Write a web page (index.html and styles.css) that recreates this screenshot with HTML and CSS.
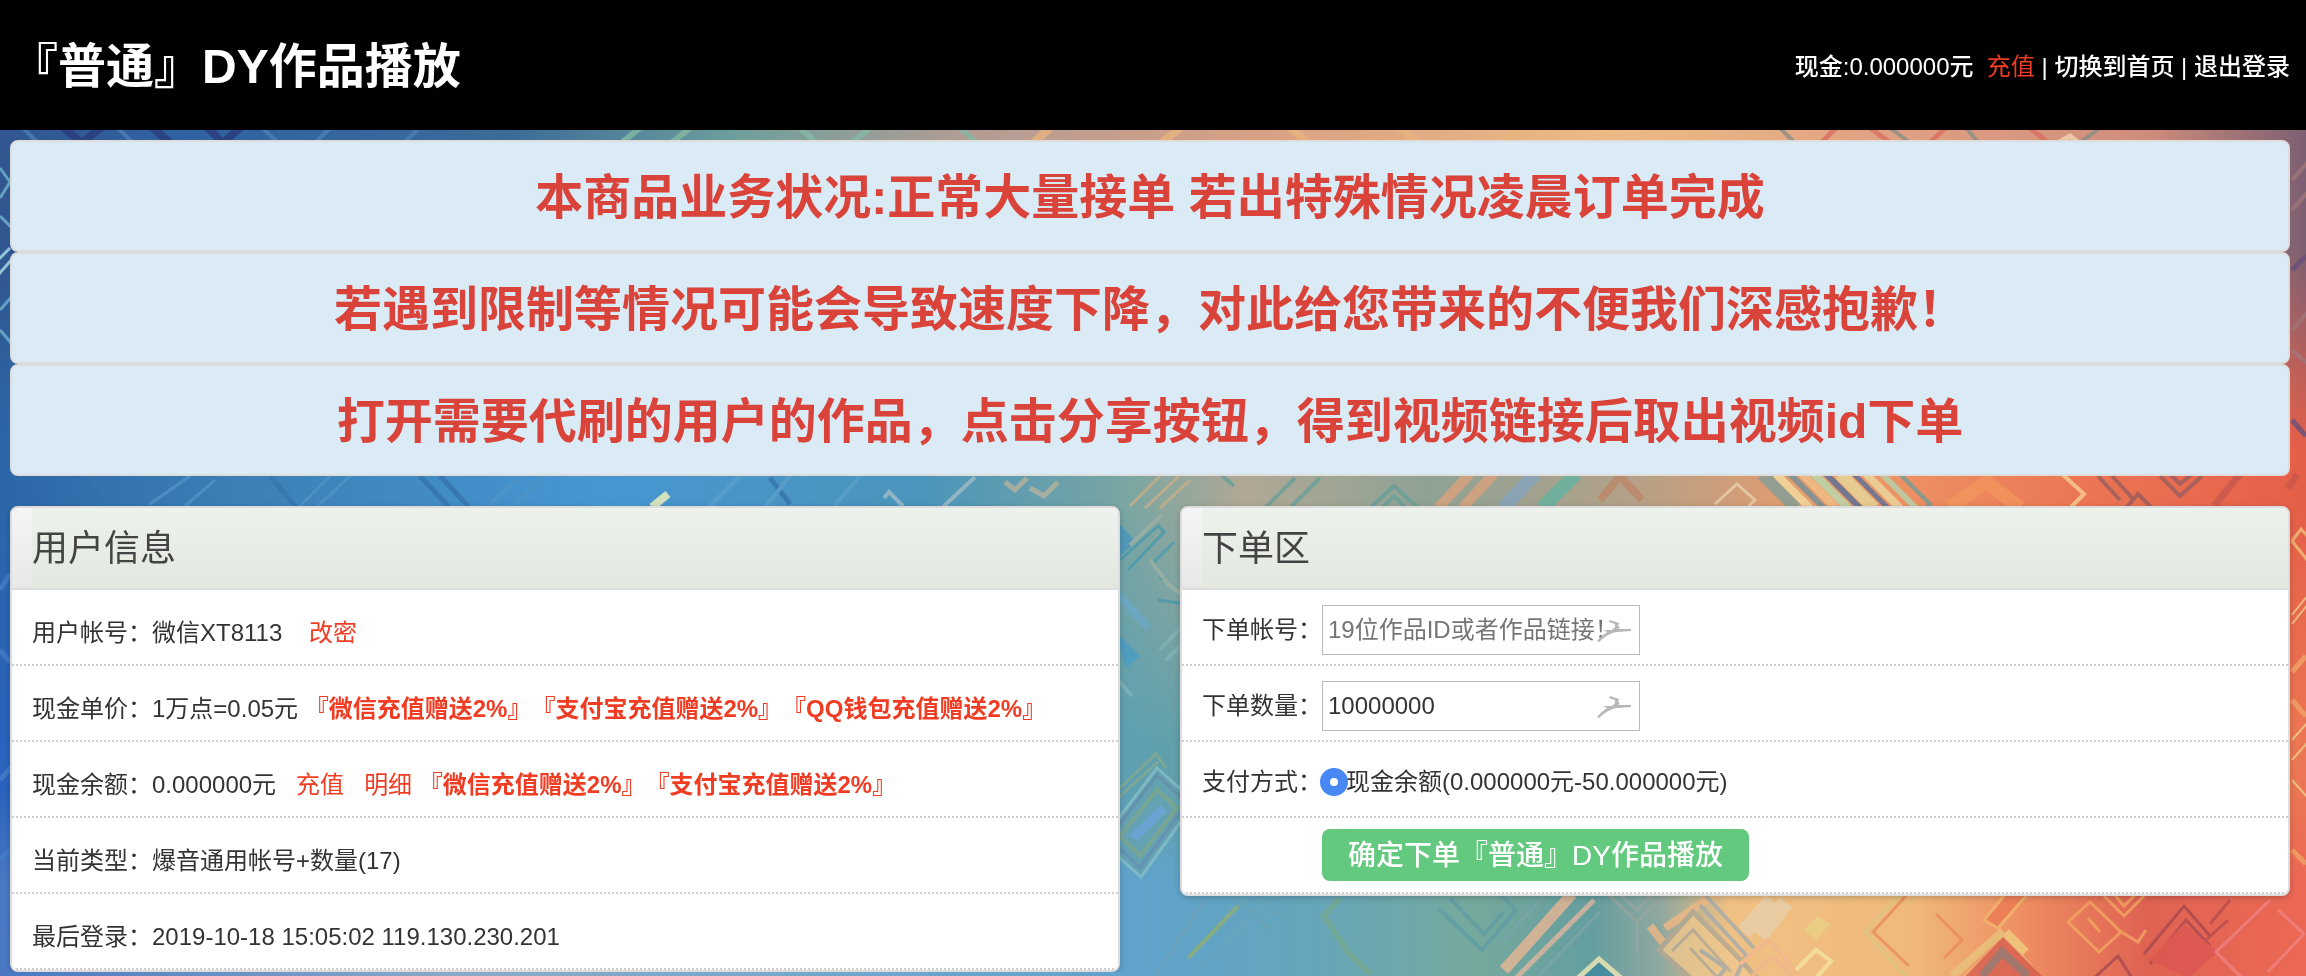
FILE: index.html
```html
<!DOCTYPE html>
<html lang="zh-CN">
<head>
    <meta charset="UTF-8">
    <meta name="viewport" content="width=device-width, initial-scale=1.0">
    <title>『普通』DY作品播放</title>
    <link rel="stylesheet" href="styles.css">
</head>
<body>

<!-- Page wallpaper -->
<svg class="wallpaper" viewBox="0 0 2306 976" preserveAspectRatio="xMidYMid slice" aria-hidden="true">
    <defs>
        <linearGradient id="bgTop">
            <stop offset="0" stop-color="#32568f"/>
            <stop offset=".08" stop-color="#2f62a2"/>
            <stop offset=".22" stop-color="#3a6b98"/>
            <stop offset=".32" stop-color="#6f9f9c"/>
            <stop offset=".42" stop-color="#b39c94"/>
            <stop offset=".55" stop-color="#d9a183"/>
            <stop offset=".7" stop-color="#edba84"/>
            <stop offset=".82" stop-color="#e0a183"/>
            <stop offset=".93" stop-color="#d18d7b"/>
            <stop offset="1" stop-color="#7c5f72"/>
        </linearGradient>
        <linearGradient id="bgMid">
            <stop offset="0" stop-color="#2c66a8"/>
            <stop offset=".1" stop-color="#3b7fb6"/>
            <stop offset=".26" stop-color="#4796d2"/>
            <stop offset=".4" stop-color="#4a95bb"/>
            <stop offset=".49" stop-color="#7ba6a2"/>
            <stop offset=".54" stop-color="#b1a894"/>
            <stop offset=".62" stop-color="#8ea294"/>
            <stop offset=".7" stop-color="#b0a18a"/>
            <stop offset=".8" stop-color="#ee9a68"/>
            <stop offset=".9" stop-color="#eb7655"/>
            <stop offset="1" stop-color="#e55f48"/>
        </linearGradient>
        <linearGradient id="bgLow">
            <stop offset="0" stop-color="#2a62bd"/>
            <stop offset=".2" stop-color="#4b86c4"/>
            <stop offset=".48" stop-color="#5d9fb5"/>
            <stop offset=".52" stop-color="#62a0a6"/>
            <stop offset=".8" stop-color="#ec9a68"/>
            <stop offset="1" stop-color="#eb7653"/>
        </linearGradient>
        <linearGradient id="bgBottom">
            <stop offset="0" stop-color="#4a78c2"/>
            <stop offset=".2" stop-color="#8cabc8"/>
            <stop offset=".49" stop-color="#5fa3cd"/>
            <stop offset=".57" stop-color="#66a5b9"/>
            <stop offset=".64" stop-color="#76a99d"/>
            <stop offset=".69" stop-color="#649e9f"/>
            <stop offset=".72" stop-color="#8fa89f"/>
            <stop offset=".75" stop-color="#f0c184"/>
            <stop offset=".83" stop-color="#efb97a"/>
            <stop offset=".88" stop-color="#ee8c60"/>
            <stop offset=".93" stop-color="#df6353"/>
            <stop offset="1" stop-color="#ec6854"/>
        </linearGradient>
        <linearGradient id="fadeMid" x2="0" y2="1">
            <stop offset="0" stop-color="#000"/>
            <stop offset=".5" stop-color="#fff"/>
        </linearGradient>
        <mask id="maskMid" maskUnits="userSpaceOnUse" x="0" y="250" width="2306" height="726">
            <rect y="250" width="2306" height="400" fill="url(#fadeMid)"/>
            <rect y="649" width="2306" height="327" fill="#fff"/>
        </mask>
        <mask id="maskLow" maskUnits="userSpaceOnUse" x="0" y="510" width="2306" height="466">
            <rect y="510" width="2306" height="466" fill="url(#fadeMid)"/>
        </mask>
        <mask id="maskBottom" maskUnits="userSpaceOnUse" x="0" y="790" width="2306" height="186">
            <rect y="790" width="2306" height="186" fill="url(#fadeMid)"/>
        </mask>
    </defs>
    <rect width="2306" height="976" fill="url(#bgTop)"/>
    <rect y="250" width="2306" height="726" fill="url(#bgMid)" mask="url(#maskMid)"/>
    <rect y="510" width="2306" height="466" fill="url(#bgLow)" mask="url(#maskLow)"/>
    <rect y="790" width="2306" height="186" fill="url(#bgBottom)" mask="url(#maskBottom)"/>

    <g fill="none" opacity=".8">
        <!-- top edge -->
        <path d="M60 125l22 18 22-18M150 125l20 18M205 125l18 18 20-18" stroke="#2a3c7c" stroke-width="8"/>
        <path d="M20 125l18 18M118 128l14 14M330 128l-16 16M262 128l18 16M420 128l-18 16" stroke="#4b7fb5" stroke-width="4"/>
        <path d="M640 128l-20 16M690 128l-20 16M800 128l18 16M870 128l-20 16M960 128l18 16" stroke="#86b8a4" stroke-width="6"/>
        <path d="M1050 128l-18 16M1180 128l-20 16M1290 128l20 16M1400 128l20 16M1520 128l-18 16" stroke="#e8b47d" stroke-width="8"/>
        <path d="M1780 128l16 16M1890 128l22 16M1966 128l12 14M2100 128l-22 16" stroke="#8a8f86" stroke-width="4"/>
        <path d="M1820 144l18-18M1870 128l22 16M1928 144l20-18M2030 128l20 16" stroke="#db6f63" stroke-width="5"/>
        <path d="M2056 144l14-8 10 8" stroke="#f3d5b0" stroke-width="5"/>

        <!-- edge columns -->
        <path d="M0 168l10 14-10 16M0 310l14-16M0 216l12 12M0 330l12 14" stroke="#6fb6cf" stroke-width="3"/>
        <path d="M-4 262l14-14M-2 275l16-18" stroke="#a3e3ea" stroke-width="3"/>
        <path d="M0 590l10-16M0 650l10 12M0 780l12-14M0 860l12-12M0 920l10 10" stroke="#477dc8" stroke-width="5"/>
        <path d="M2292 180l16-18M2292 210l16-18M2292 330l16-18M2292 350l16 14" stroke="#a0777a" stroke-width="4"/>
        <path d="M2292 270l14-14M2292 420l14 16" stroke="#66507c" stroke-width="5"/>
        <path d="M2292 541l9-12 9 10M2292 541l16 20" stroke="#f0c078" stroke-width="3"/>
        <path d="M2292 615l16-20M2292 624l16-20M2292 740l16-18M2292 780l16 18M2292 760l16-18" stroke="#f2d08c" stroke-width="2"/>
        <path d="M2292 672l14-16M2292 850l14 14M2292 700l14 16" stroke="#f2a468" stroke-width="5"/>

        <!-- strip between the notices and the panels -->
        <path d="M190 476l-40 28M215 480l-30 26M330 476l-30 30M350 476l-32 30M520 476l-32 30M545 476l-32 30" stroke="#4f94c8" stroke-width="3"/>
        <path d="M90 476l28 30M270 476l25 30M420 476l28 30M440 476l28 30M770 478l20 26" stroke="#3674ad" stroke-width="5"/>
        <path d="M668 494l-16 13" stroke="#f4f6b8" stroke-width="8"/>
        <path d="M740 476l-30 30M790 476l-24 30M860 476l-26 30" stroke="#5ba0c8" stroke-width="4"/>
        <path d="M884 498l5-6 14 14M975 477l-32 30" stroke="#9fbcc7" stroke-width="4"/>
        <path d="M1005 482l10 8 12-12M1030 488l14 8 14-14" stroke="#b6b29c" stroke-width="5"/>
        <path d="M1130 506l30-30M1145 508l34-32M1160 508l30-28" stroke="#c9ae87" stroke-width="3"/>
        <path d="M1222 476l12 10M1265 508l30-30M1290 508l30-30M1370 508l24-22 24 22M1382 508l12-12 12 12" stroke="#68a09a" stroke-width="4"/>
        <path d="M1470 474l-32 34M1494 474l-32 34" stroke="#dba27c" stroke-width="10"/>
        <path d="M1535 474l-32 34" stroke="#86a4bc" stroke-width="14"/>
        <path d="M1576 474l-34 34" stroke="#65b3a0" stroke-width="14"/>
        <path d="M1600 500l20-24 22 24" stroke="#bd8768" stroke-width="8"/>
        <path d="M1715 504l22-20 18 16-8 8" stroke="#e8d0ac" stroke-width="3"/>
        <path d="M1762 474l34 34" stroke="#829f98" stroke-width="12"/>
        <path d="M1776 474l34 34" stroke="#f4dda0" stroke-width="8"/>
        <path d="M1790 474l34 34" stroke="#70929b" stroke-width="6"/>
        <path d="M1802 474l34 34" stroke="#f0bf86" stroke-width="8"/>
        <path d="M1814 474l34 34" stroke="#b7dbb1" stroke-width="8"/>
        <path d="M1826 474l34 34" stroke="#536f9a" stroke-width="6"/>
        <path d="M1840 474l34 34" stroke="#e5d89b" stroke-width="12"/>
        <path d="M1854 474l34 34" stroke="#5a719a" stroke-width="5"/>
        <path d="M1866 474l34 34" stroke="#e9d99f" stroke-width="8"/>
        <path d="M1882 474l34 34" stroke="#b3d5ac" stroke-width="6"/>
        <path d="M1900 474l30 30-6 6" stroke="#709d99" stroke-width="4"/>
        <path d="M1950 508l36-26 34 26" stroke="#f4955d" stroke-width="14"/>
        <path d="M2062 474l22 20-14 14" stroke="#f7cf92" stroke-width="4"/>
        <path d="M2098 476l22 24M2112 476l22 24M2160 476l20 20 22-20M2170 474l10 10 12-10M2126 508l12-14 14 14" stroke="#9a5d5e" stroke-width="4"/>
        <path d="M2240 474l-26 32M2298 474l-10 14" stroke="#c8584f" stroke-width="7"/>

        <!-- column between the panels -->
        <path d="M1116 520l20 22-16 14" fill="#4a97bc"/>
        <path d="M1120 560l38-34 6 6-36 38M1162 580l-8-18 20-20M1158 600l28 4" stroke="#4a9aaf" stroke-width="3"/>
        <path d="M1130 545l32-30M1150 560l18 24 16 12" stroke="#9db1a4" stroke-width="4"/>
        <path d="M1118 594l30 34" stroke="#6ba8c4" stroke-width="8"/>
        <path d="M1114 630l26 26-14 12" fill="#4b9cc4"/>
        <path d="M1180 628l-20 22M1184 642l-18 18M1118 680l14 16" stroke="#82b3b5" stroke-width="4"/>
        <path d="M1120 788l36-34 10 14M1118 798l40-36" stroke="#84aa90" stroke-width="3"/>
        <path d="M1157 768l38 34-54 75-40-36z" stroke="#86bfc8" stroke-width="3" fill="#66a2b2"/>
        <path d="M1157 775l30 28-47 65-31-30z" stroke="#668fae" stroke-width="3"/>
        <path d="M1157 790l20 18-37 48-20-20z" stroke="#7ea88a" stroke-width="4"/>
        <path d="M1133 838l31-30" stroke="#6ea5da" stroke-width="9"/>

        <!-- bottom edge -->
        <path d="M1205 900l-50 76M1250 918l-50 50M1230 890l40 40M1262 900l20 18" stroke="#6fa4b8" stroke-width="3"/>
        <path d="M1238 906l-50 52" stroke="#8fae74" stroke-width="4"/>
        <path d="M1340 898l-16 18 24 36M1345 950l26 24" stroke="#74a990" stroke-width="6"/>
        <path d="M1438 908l44 42 34-40-18-18M1450 898l34 36 20-22" stroke="#609da3" stroke-width="4"/>
        <path d="M1545 896l-46 48M1600 912l-62 64" stroke="#7da4aa" stroke-width="3"/>
        <path d="M1572 894l-68 76" stroke="#e9b795" stroke-width="11"/>
        <path d="M1594 900l-78 78" stroke="#dfb79f" stroke-width="5"/>
        <path d="M1578 978l21-19 22 19" stroke="#f1eab5" stroke-width="5" fill="#3f88a0"/>
        <path d="M1608 894l29 28 28-28M1620 894l17 16 16-16M1637 922v30" stroke="#9aa5a0" stroke-width="3"/>
        <path d="M1715 894l-50 34M1650 926l14 18" stroke="#efb884" stroke-width="8"/>
        <path d="M1659 950l34-38 40 40 24 26-60 6z" stroke="#b3a893" stroke-width="5" fill="#eec78d"/>
        <path d="M1672 951l21-21 38 42M1690 948l28 30" stroke="#b7ab96" stroke-width="3"/>
        <path d="M1700 905l46 50-10 22M1706 896l48 52M1700 950l26 18-10 12" stroke="#a7abac" stroke-width="4"/>
        <path d="M1772 900l-28 32M1786 902l-26 34" stroke="#e8d0aa" stroke-width="16"/>
        <path d="M1752 976l20-20 20 20M1740 964l28-24 30 34" stroke="#f0b78e" stroke-width="4"/>
        <path d="M1796 970l20-20 15 11-16 18" stroke="#f4e49f" stroke-width="4"/>
        <path d="M1804 930l14-14 12 8-14 16z" fill="#ead184"/>
        <path d="M1906 896l-33 36 36 34" stroke="#ea8c5c" stroke-width="3"/>
        <path d="M1898 896l-33 36 40 44" stroke="#dcc681" stroke-width="3"/>
        <path d="M1936 914l26 26-18 18" stroke="#ea8c5c" stroke-width="3"/>
        <path d="M2004 896l-20 24 14 8 28-32" stroke="#f0b76d" stroke-width="3" fill="#ed7a55"/>
        <path d="M1952 976l48-42 36 42" stroke="#e8c47d" stroke-width="8"/>
        <path d="M2003 937l40 40h-78z" fill="#d75f51"/>
        <path d="M1982 976l20-24 26 24" stroke="#8e716f" stroke-width="8"/>
        <path d="M2006 932l20 20" stroke="#f1cf7f" stroke-width="8"/>
        <path d="M2090 902l31 30-22 20-31-30z" stroke="#f3a662" stroke-width="3"/>
        <path d="M2088 918l12 14M2104 896l20 20 20-20M2114 894l10 12 12-12M2118 930l20 12 8-12" stroke="#f3a562" stroke-width="3"/>
        <path d="M2092 980l26-24 14 22M2144 954l40-48 26 30M2150 964l36-44 24 26" stroke="#a9484f" stroke-width="3"/>
        <path d="M2184 924l34 28-30 26-40-18z" fill="#dc5751"/>
        <path d="M2228 920l-22 20M2230 900l-20 24" stroke="#b84e4c" stroke-width="3"/>
        <path d="M2270 900l-54 52 26 26M2278 910l26 24-36 38" stroke="#f08384" stroke-width="3"/>
    </g>
</svg>

<header class="header">
    <h1>『普通』DY作品播放</h1>
    <nav class="header-nav">
        现金:0.000000元&nbsp; <a class="red" href="#">充值</a> | <a href="#">切换到首页</a> | <a href="#">退出登录</a>
    </nav>
</header>

<main class="main">
    <div class="notice">本商品业务状况:正常大量接单 若出特殊情况凌晨订单完成</div>
    <div class="notice">若遇到限制等情况可能会导致速度下降，对此给您带来的不便我们深感抱歉！</div>
    <div class="notice">打开需要代刷的用户的作品，点击分享按钮，得到视频链接后取出视频id下单</div>

    <div class="columns">
        <section class="panel">
            <div class="panel-head"><h3>用户信息</h3></div>
            <ul class="rows">
                <li>用户帐号：微信XT8113&nbsp;&nbsp;&nbsp; <a class="red" href="#">改密</a></li>
                <li>现金单价：1万点=0.05元 <b class="red">『微信充值赠送2%』『支付宝充值赠送2%』『QQ钱包充值赠送2%』</b></li>
                <li>现金余额：0.000000元&nbsp;&nbsp; <a class="red" href="#">充值</a>&nbsp;&nbsp; <a class="red" href="#">明细</a> <b class="red">『微信充值赠送2%』『支付宝充值赠送2%』</b></li>
                <li>当前类型：爆音通用帐号+数量(17)</li>
                <li>最后登录：2019-10-18 15:05:02 119.130.230.201</li>
            </ul>
        </section>

        <section class="panel">
            <div class="panel-head"><h3>下单区</h3></div>
            <form class="rows">
                <div class="row">
                    <label class="label" for="account">下单帐号：</label>
                    <span class="field">
                        <input type="text" id="account" placeholder="19位作品ID或者作品链接！">
                        <svg class="field-icon" viewBox="0 0 34 24" aria-hidden="true">
                            <path d="M0 22C6 15 12 11 19 10L34 10V12L21 13C13 13 8 18 2 23Z"/>
                            <path d="M6 11L15 11 18 8 18 5 12 3 13 1 22 4 21 7 23 8 20 11 12 16 10 13Z"/>
                        </svg>
                    </span>
                </div>
                <div class="row">
                    <label class="label" for="amount">下单数量：</label>
                    <span class="field">
                        <input type="text" id="amount" value="10000000">
                        <svg class="field-icon" viewBox="0 0 34 24" aria-hidden="true">
                            <path d="M0 22C6 15 12 11 19 10L34 10V12L21 13C13 13 8 18 2 23Z"/>
                            <path d="M6 11L15 11 18 8 18 5 12 3 13 1 22 4 21 7 23 8 20 11 12 16 10 13Z"/>
                        </svg>
                    </span>
                </div>
                <div class="row">
                    <span class="label">支付方式：</span>
                    <input type="radio" id="balance" name="pay" checked>
                    <label for="balance">现金余额(0.000000元-50.000000元)</label>
                </div>
                <div class="row row-submit">
                    <button type="button" class="submit">确定下单『普通』DY作品播放</button>
                </div>
            </form>
        </section>
    </div>
</main>

</body>
</html>
```
FILE: styles.css
```css
* {
    box-sizing: border-box;
}

body {
    margin: 0;
    font-family: "Liberation Sans", "Noto Sans CJK SC", sans-serif;
    font-size: 24px;
    line-height: 36px;
    color: #333;
    background: #4a90b8;
    text-spacing-trim: space-all;
}

a {
    color: inherit;
    text-decoration: none;
}

.red {
    color: #f03c22;
}

/* Wallpaper behind the whole page */
.wallpaper {
    position: fixed;
    top: 0;
    left: 0;
    width: 100%;
    height: 100%;
    z-index: -1;
}

/* Header bar */
.header {
    display: flex;
    justify-content: space-between;
    align-items: center;
    height: 130px;
    padding: 4px 16px 0 10px;
    background: #000;
    color: #fff;
}

.header h1 {
    margin: 0;
    font-size: 48px;
    line-height: 72px;
}

.header-nav {
    font-weight: 500;
}

.header-nav .red {
    font-weight: 400;
}

.main {
    padding: 10px 16px 0 10px;
}

/* Notices */
.notice {
    padding: 20px 18px 16px;
    border: 2px solid #ddd;
    border-radius: 8px;
    background: #dbebf6;
    color: #d9433a;
    font-size: 48px;
    font-weight: bold;
    line-height: 72px;
    text-align: center;
}

/* Panels */
.columns {
    display: grid;
    grid-template-columns: 1fr 1fr;
    gap: 60px;
    align-items: start;
    margin-top: 30px;
}

.panel {
    border: 2px solid #ddd;
    border-radius: 8px;
    background: #fff;
    overflow: hidden;
    box-shadow: 0 2px 6px rgba(0, 0, 0, 0.2);
}

.panel-head {
    padding-left: 20px;
    border-bottom: 2px solid #ddd;
    background: linear-gradient(#f5f5f5, #e8e8e8);
}

.panel-head h3 {
    margin: 0;
    padding-top: 2px;
    background: linear-gradient(#edf2ec, #e2e7e0);
    color: #444;
    font-size: 36px;
    font-weight: normal;
    line-height: 78px;
}

.rows {
    margin: 0;
    padding: 0;
    list-style: none;
}

.rows li,
.row {
    height: 76px;
    padding: 6px 20px 0;
    border-bottom: 2px dotted #ccc;
}

.rows li {
    line-height: 74px;
}

.row {
    display: flex;
    align-items: center;
}

.row-submit {
    padding: 0 20px 0 140px;
}

.label {
    width: 120px;
}

/* Form controls */
.field {
    position: relative;
}

.field input {
    display: block;
    width: 318px;
    height: 50px;
    padding: 0 5px;
    border: 1px solid #bbb;
    color: #333;
    font: inherit;
}

.field input::placeholder {
    color: #757575;
}

.field-icon {
    position: absolute;
    top: 14px;
    right: 9px;
    width: 34px;
    height: 24px;
    fill: #b8b8b8;
}

.row input[type="radio"] {
    appearance: none;
    width: 28px;
    height: 28px;
    margin: 0 -2px;
    border: 10px solid #4788f4;
    border-radius: 50%;
    background: #fff;
}

.submit {
    height: 52px;
    padding: 2px 26px 0;
    border: 0;
    border-radius: 8px;
    background: #62c97e;
    color: #fff;
    font: 500 28px/50px "Liberation Sans", "Noto Sans CJK SC", sans-serif;
    text-spacing-trim: space-all;
}
```
